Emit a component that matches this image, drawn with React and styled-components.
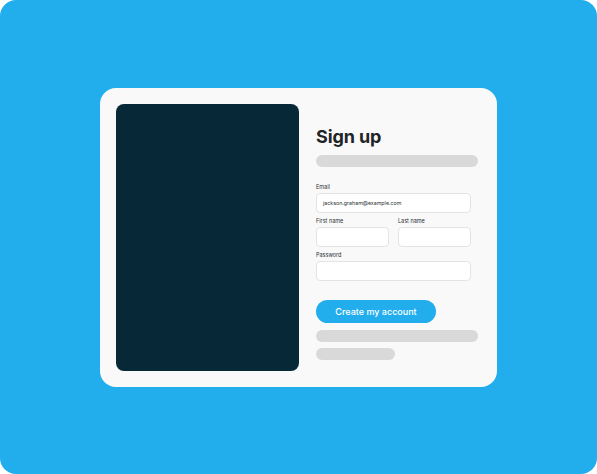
import React from 'react';
import styled, { createGlobalStyle } from 'styled-components';

const GlobalStyle = createGlobalStyle`
    html, body {
        margin: 0;
        padding: 0;
        background: #ffffff;
    }
    * {
        box-sizing: border-box;
    }
`;

const Stage = styled.div`
    width: 597px;
    height: 474px;
    background: #22aeed;
    border-radius: 16px;
    display: flex;
    align-items: center;
    justify-content: center;
    font-family: Inter, "Noto Sans", sans-serif;
`;

const Card = styled.div`
    width: 397px;
    height: 299px;
    background: #f9f9f9;
    border-radius: 16px;
    padding: 16px 19px 16px 16px;
    display: flex;
    gap: 17px;
`;

const Visual = styled.div`
    width: 183px;
    flex-shrink: 0;
    background: #062837;
    border-radius: 8px;
`;

const Form = styled.div`
    flex: 1;
    display: flex;
    flex-direction: column;
    padding-top: 22px;
`;

const Title = styled.h1`
    margin: 0;
    font-size: 18px;
    line-height: 22px;
    font-weight: 700;
    color: #1f2427;
    letter-spacing: -0.1px;
`;

const Bar = styled.div`
    height: 12px;
    width: ${p => p.$width || '100%'};
    background: #d9d9d9;
    border-radius: 6px;
    margin-top: ${p => p.$top || 0}px;
`;

const Fields = styled.div`
    display: flex;
    flex-direction: column;
    gap: 5px;
    margin-top: 17px;
    padding-right: 7px;
`;

const Row = styled.div`
    display: flex;
    gap: 9px;
`;

const Field = styled.div`
    flex: 1;
    display: flex;
    flex-direction: column;
    gap: 3px;
`;

const Label = styled.label`
    font-size: 5.5px;
    line-height: 6px;
    color: #2a2f33;
`;

const Input = styled.div`
    height: 20px;
    background: #ffffff;
    border: 1px solid #e4e4e4;
    border-radius: 4px;
    padding: 0 6px;
    display: flex;
    align-items: center;
    font-size: 5.3px;
    color: #2a2f33;
`;

const Button = styled.button`
    margin-top: 19px;
    width: 120px;
    height: 23px;
    border: none;
    border-radius: 12px;
    background: #22aeed;
    color: #ffffff;
    font-family: inherit;
    font-size: 9px;
    font-weight: 500;
    padding: 0;
`;

export default function App() {
    return (
        <>
            <GlobalStyle />
            <Stage>
                <Card>
                    <Visual />
                    <Form>
                        <Title>Sign up</Title>
                        <Bar $top={7} />
                        <Fields>
                            <Field>
                                <Label>Email</Label>
                                <Input>jackson.graham@example.com</Input>
                            </Field>
                            <Row>
                                <Field>
                                    <Label>First name</Label>
                                    <Input />
                                </Field>
                                <Field>
                                    <Label>Last name</Label>
                                    <Input />
                                </Field>
                            </Row>
                            <Field>
                                <Label>Password</Label>
                                <Input />
                            </Field>
                        </Fields>
                        <Button>Create my account</Button>
                        <Bar $top={7} />
                        <Bar $top={6} $width="79px" />
                    </Form>
                </Card>
            </Stage>
        </>
    );
}
